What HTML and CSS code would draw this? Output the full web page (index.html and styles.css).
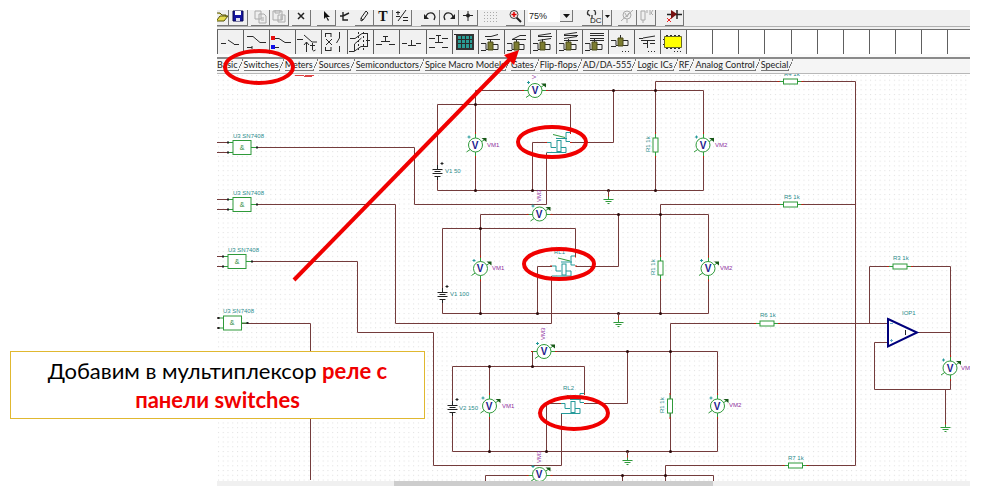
FILE: index.html
```html
<!DOCTYPE html>
<html lang="ru">
<head>
<meta charset="utf-8">
<title>Мультиплексор: реле</title>
<link rel="stylesheet" href="styles.css">
</head>
<body>
<main class="slide">
  <section class="app">
    <div class="toolbar">
      <div class="group">
        <button class="tool tool-cut" aria-label="Open"><svg width="12" height="15"><path d="M0 3h3l2 2h4v2M0 11h7l4-5H3L0 10" fill="#e6dc50" stroke="#55520a"/></svg></button>
        <button class="tool" aria-label="Save"><svg width="16" height="15"><path d="M3 1h10v10H3z" fill="#1414a0" stroke="#080850"/><path d="M5 1h6v4H5z" fill="#fff"/><path d="M6 8h4v3H6z" fill="#dde"/></svg></button>
      </div>
      <div class="group near">
        <button class="tool" aria-label="Copy"><svg width="16" height="15"><path d="M3 1h6v8H3zM7 4h5l2 2v7H7zM9 8h3M9 10h3" fill="#eee" stroke="#aaa"/></svg></button>
        <button class="tool" aria-label="Paste"><svg width="16" height="15"><path d="M2 1h9v9H2zM4 0h5v3H4zM7 5h7v7H7zM9 7h3M9 9h3" fill="#eee" stroke="#aaa"/></svg></button>
      </div>
      <div class="group near">
        <button class="tool" aria-label="Delete"><svg width="16" height="15"><path d="M5 3l6 6M11 3l-6 6" stroke="#222" stroke-width="1.5"/></svg></button>
      </div>
      <div class="group">
        <button class="tool" aria-label="Select"><svg width="16" height="15"><path d="M6 1v8l2-2 2 4 1-1-2-3h3z" fill="#111"/></svg></button>
        <button class="tool flat" aria-label="Wire"><svg width="16" height="15"><path d="M3 6h3M6 2v8h5M6 6l6-3" fill="none" stroke="#222" stroke-width="1.400"/></svg></button>
        <button class="tool" aria-label="Pencil"><svg width="16" height="15"><path d="M5 11V8l5-7 2 2-5 7zM5 8l2 2" fill="#eee" stroke="#222"/></svg></button>
        <button class="tool tool-text" aria-label="Text">T</button>
        <button class="tool" aria-label="Scale"><svg width="16" height="15"><path d="M4 11L12 0M2 2.500h4M4 1v4M9 7.500h5M9 10.500h5M2 6.500h4" fill="none" stroke="#222"/></svg></button>
      </div>
      <div class="group far">
        <button class="tool" aria-label="Undo"><svg width="16" height="15"><path d="M4 7C5 2 12 1 13 7l-1 3" fill="none" stroke="#222" stroke-width="1.300"/><path d="M2 4v5h5z" fill="#222"/></svg></button>
        <button class="tool" aria-label="Redo"><svg width="16" height="15"><path d="M12 7C11 2 4 1 3 7l1 3" fill="none" stroke="#222" stroke-width="1.300"/><path d="M14 4v5H9z" fill="#222"/></svg></button>
        <button class="tool" aria-label="Center"><svg width="16" height="15"><path d="M3 5.500h10M8 1v10" stroke="#222"/><circle cx="8" cy="5.500" r="2" fill="#222"/></svg></button>
      </div>
      <div class="group near">
        <button class="tool flat" aria-label="Grid"><svg width="16" height="15"><path d="M2 2.500h13M2 5.500h13M2 8.500h13M2 11.500h13" stroke="#aaa" stroke-dasharray="1 2"/></svg></button>
      </div>
      <div class="group">
        <button class="tool" aria-label="Zoom"><svg width="16" height="15"><path d="M9 7l5 5" stroke="#222" stroke-width="2"/><circle cx="7" cy="4.500" r="4" fill="#f6e8e8" stroke="#444"/><path d="M4.500 4.500h5M7 2v5" stroke="#d00" stroke-width="1.500"/></svg></button>
      </div>
      <div class="group near">
        <label class="combo"><select aria-label="Масштаб"><option>75%</option></select><svg class="combo-arrow" width="13" height="12"><path d="M3 4h7l-3.500 4z" fill="#111"/></svg></label>
      </div>
      <div class="group far">
        <button class="tool tool-dc" aria-label="DC"><svg width="19" height="15"><path d="M5 5a4 4 0 1 1 7 0M5 4l2 2M9 5v3" fill="none" stroke="#333" stroke-width="1.300"/><text class="dc" x="7" y="13">DC</text></svg></button>
        <button class="tool tool-drop" aria-label="DC mode"><svg width="9" height="15"><path d="M2 5h5L4.500 8z" fill="#111"/></svg></button>
      </div>
      <div class="group">
        <button class="tool" aria-label="Meter"><svg width="16" height="15"><circle cx="8" cy="5" r="4" fill="none" stroke="#aaa"/><path d="M2 11L14 0M8 9v4M6 3l2 4 2-4" stroke="#aaa" fill="none"/></svg></button>
        <button class="tool" aria-label="Resistor"><svg width="16" height="15"><path d="M3 1h4v9H3zM5 10v3M9 3V0M12 0v5M15 0l-2 3 2 2" fill="none" stroke="#aaa"/></svg></button>
      </div>
      <div class="group far">
        <button class="tool" aria-label="Diode"><svg width="17" height="15"><path d="M1 4.500h15M11 0v9" stroke="#222" stroke-width="1.500"/><path d="M5 0l6 4-6 5z" fill="#711"/><path d="M1 8l4 4M5 8l-4 4" stroke="#e22"/></svg></button>
      </div>
    </div>

    <div class="parts">
      <button class="part" aria-label="Switch"><svg width="24" height="24"><path d="M3 13.500h5M10 10l6 4M16 14.500h5" /></svg></button>
      <button class="part" aria-label="Changeover"><svg width="24" height="24"><path d="M3 6.500h6l7 6h6M3 17.500h5M8 16v3" /></svg></button>
      <button class="part" aria-label="Digital switch"><svg width="24" height="24"><path d="M3 8.500h6l6 4h6M3 17.500h6" /><path d="M1 6h4v4H1z" class="red"/><path d="M1 15h4v4H1z" class="blue"/></svg></button>
      <button class="part" aria-label="Time switch"><svg width="24" height="24"><path d="M1 9.500h6M8 5l8 7h5M10.500 22V12M8 15l2.500-3 2.500 3M16.500 13v7q1 2 3 0M14 15.500h5" /></svg></button>
      <button class="part" aria-label="Double switch"><svg width="24" height="24"><path d="M3 3.500h6M3.500 3v4M9 3v4M3 20.500h6M3.500 17v4M9 17v4M4 9l6 6M10 9l-6 6M17.500 2v6l-3 5M17.500 22v-6"/></svg></button>
      <button class="part" aria-label="Controlled switch"><svg width="24" height="24"><path d="M2 8.500h5l7-5h6M1 21.500h5l7-5h7M6.500 21v-7l7-6M19.500 3v14M18 10.500h4" /><path d="M10.500 2v20M15.500 2v20" stroke-dasharray="2 2"/></svg></button>
      <button class="part" aria-label="Push button"><svg width="24" height="24"><path d="M2 14.500h6M7 11.500h9M15 14.500h6M11.500 6v5M9 6.500h5" /></svg></button>
      <button class="part" aria-label="Push button closed"><svg width="24" height="24"><path d="M2 13.500h5M8 15.500h8M16 13.500h5M11.500 10v5" /></svg></button>
      <button class="part" aria-label="Double push button"><svg width="24" height="24"><path d="M2 8.500h6M15 8.500h6M8 12.500h8M2 17.500h6M15 17.500h6M11.500 5v7M9 5.500h5" /></svg></button>
      <button class="part" aria-label="Keypad"><svg width="24" height="24"><path d="M3 4h18v16H3z" class="case"/><path d="M5 6h14v12H5z" class="keys"/><path d="M5 9.500h14M5 13.500h14M8.500 6v12M12.500 6v12M16.500 6v12M1 4.500h2"/></svg></button>
      <button class="part" aria-label="Relay"><svg width="24" height="24"><path d="M6 6.500h6l7-2M8 9.500h13M2 13.500h5v6h12v-5h-5M2 20.500h5M11.500 9v3" /><path class="coil" d="M9 12h5v8H9z"/></svg></button>
      <button class="part" aria-label="Changeover relay"><svg width="24" height="24"><path d="M7 9.500l8-4h6M7 9.500h14M2 13.500h5v6h12v-5h-5M2 20.500h5M11.500 9v3" /><path class="coil" d="M9 12h5v8H9z"/></svg></button>
      <button class="part" aria-label="Double relay"><svg width="24" height="24"><path d="M7 5.500l13-2M7 6.500h14M7 10.500l13-2M2 13.500h5v6h12v-5h-5M2 20.500h5M11.500 9v3" /><path class="coil" d="M9 12h5v8H9z"/></svg></button>
      <button class="part" aria-label="Triple relay"><svg width="24" height="24"><path d="M7 4.500l13-2M7 5.500h14M7 8.500l13-2M7 10.500h14M2 13.500h5v6h12v-5h-5M2 20.500h5M11.500 9v3" /><path class="coil" d="M9 12h5v8H9z"/></svg></button>
      <button class="part" aria-label="Quad relay"><svg width="24" height="24"><path d="M7 3.500h14M7 5.500h14M7 8.500h14M7 10.500h14M2 13.500h5v6h12v-5h-5M2 20.500h5M11.500 9v3" /><path class="coil" d="M9 12h5v8H9z"/></svg></button>
      <button class="part" aria-label="Relay coil"><svg width="24" height="24"><path d="M2 10.500h5v5h12v-5h-5M2 16.500h5M11.500 5v3" /><path class="coil" d="M9 8h5v8H9z"/><path d="M13 21.500h7" stroke-dasharray="1 2"/></svg></button>
      <button class="part" aria-label="Relay contacts"><svg width="24" height="24"><path d="M4 8.500h4M8 8l12-2M6 10.500h14M8 13.500h5M12.500 10v8M15 13.500h5" /><path d="M13 21.500h7" stroke-dasharray="1 2"/></svg></button>
      <button class="part" aria-label="Chip"><svg width="24" height="24"><path d="M5 5.500h14M5 18.500h14M2 9.500h20M2 14.500h20" stroke-dasharray="2 2"/><path d="M3.500 6.500h17v11h-17z" class="chip"/><path d="M13 21.500h7" stroke-dasharray="1 2"/></svg></button>
      <span class="part blank"></span><span class="part blank"></span><span class="part blank"></span><span class="part blank"></span><span class="part blank"></span><span class="part blank"></span><span class="part blank"></span><span class="part blank"></span><span class="part blank"></span><span class="part blank"></span><span class="part blank"></span>
    </div>

    <nav class="tabs">
      <button class="tab">Basic</button>
      <button class="tab active">Switches</button>
      <button class="tab">Meters</button>
      <button class="tab">Sources</button>
      <button class="tab">Semiconductors</button>
      <button class="tab">Spice Macro Models</button>
      <button class="tab">Gates</button>
      <button class="tab">Flip-flops</button>
      <button class="tab">AD/DA-555</button>
      <button class="tab">Logic ICs</button>
      <button class="tab">RF</button>
      <button class="tab">Analog Control</button>
      <button class="tab">Special</button>
    </nav>

    <svg class="canvas" role="img" aria-label="Circuit">
      <defs>
        <pattern id="grid" width="4.760" height="4.760" patternUnits="userSpaceOnUse"><rect x="1" y="1" width="1" height="1" fill="#dedede"/></pattern>
        <g id="meter">
          <path d="M-9 7L10 -6" class="green"/><path d="M6 -7h5v4z" fill="#185818"/>
          <circle r="7" class="green white"/>
          <path d="M-8 -8h3M-6.500 -9.500v3" class="teal"/>
        </g>
        <g id="pins"><path d="M0 -11v4M0 7v4" class="green"/><path d="M-.5 -13h1v2h-1zM-.5 11h1v2h-1z" class="pin"/></g>
        <g id="hpins"><path d="M-11 0h4M7 0h4" class="green"/><path d="M-13 -.5h2v1h-2zM11 -.5h2v1h-2z" class="pin"/></g>
        <g id="res"><path d="M-11 0h4M7 0h4" class="green"/><rect x="-7" y="-2.500" width="14" height="5" class="green white"/><path d="M-13 -.5h2v1h-2zM11 -.5h2v1h-2z" class="pin"/></g>
        <g id="ground"><path d="M0 0v5" class="wire"/><path d="M0 5v4M-5 9h10M-3 11h6M-1 13h2" class="green"/><path d="M-.5 4h1v2h-1z" class="pin"/></g>
        <g id="gate"><path d="M-16 -5h12M-16 5h12" class="wire"/><path d="M-5 -5h5M-5 5h5M18 0h6" class="green"/><rect y="-7" width="18" height="14" class="green white"/><path d="M-6 -6h2v2h-2zM-6 4h2v2h-2zM23 -1h2v2h-2z" fill="#222"/></g>
        <g id="battery"><rect x="-2" y="-3" width="4" height="7" fill="#fff"/><path d="M-5 -2.500h10M-3 -.5h6M-5 1.500h10M-3 4.500h6M0 4v4M0 -3v-4" class="dark"/><path d="M3 -8.500h3M4.500 -10v3" class="dark"/></g>
        <g id="relay"><path d="M0 -8l12 3" class="green"/><path d="M17 -10h-4v9M3 -4h11M13 -1h4M-6 0h4v5h5M8 5h5v5H-6" class="teal"/><rect x="4" y="-2" width="4" height="11" class="teal"/><path d="M-8 -.5h2v1h-2zM17 -.5h2v1h-2zM17 -10.500h1v2h-1z" class="pin"/></g>
        <circle id="dot" r="1.500" fill="#2c0a0a"/>
      </defs>
      <rect width="100%" height="100%" fill="url(#grid)"/>
      <g transform="translate(-217 -74)">
        <g class="wire">
          <path d="M251 147.500H414.500V204.500H546.500V152.500"/>
          <path d="M251 204.500H395.500V323.500H551.500V276"/>
          <path d="M247 261.500H357.500V332.500H433.500V465.500H561.500V413.500"/>
          <path d="M242 323.500H310.500V480"/>
          <path d="M475.500 190.500V90.500H703.500V190.500H437.500V104.500H570.500V133M613.500 90.500V142.500H571M532.500 190.500V142.500H547M655.500 190.500V81.500H855.500V465.500H665.500V481"/>
          <path d="M480.500 313.500V214.500H708.500V313.500H442.500V228.500H575.500V256M618.500 214.500V266.500H576M537.500 313.500V266.500H552M660.500 313.500V204.500H855.500"/>
          <path d="M532.500 366V351.500H717.500V451.500H452.500V366.500H584.500V394M489.500 366V451M627.500 351.500V403.500H585M546.500 451.500V403.500H561M670.500 451.500V323.500H888"/>
          <path d="M485.500 481V475.500H713.500V481M622.500 475V481"/>
          <path d="M869.500 323V266.500H950.500V389.500H874.500V342.500H888M917 332.500H950M945.500 389V422"/>
        </g>
        <use href="#dot" x="475.500" y="104.500"/><use href="#dot" x="613.500" y="90.500"/><use href="#dot" x="655.500" y="90.500"/><use href="#dot" x="475.500" y="190.500"/><use href="#dot" x="532.500" y="190.500"/><use href="#dot" x="608.500" y="190.500"/><use href="#dot" x="655.500" y="190.500"/>
        <use href="#dot" x="480.500" y="228.500"/><use href="#dot" x="618.500" y="214.500"/><use href="#dot" x="660.500" y="214.500"/><use href="#dot" x="480.500" y="313.500"/><use href="#dot" x="537.500" y="313.500"/><use href="#dot" x="618.500" y="313.500"/><use href="#dot" x="660.500" y="313.500"/>
        <use href="#dot" x="489.500" y="366.500"/><use href="#dot" x="532.500" y="366.500"/><use href="#dot" x="627.500" y="351.500"/><use href="#dot" x="670.500" y="351.500"/><use href="#dot" x="489.500" y="451.500"/><use href="#dot" x="546.500" y="451.500"/><use href="#dot" x="627.500" y="451.500"/><use href="#dot" x="670.500" y="451.500"/>
        <use href="#dot" x="622.500" y="475.500"/><use href="#dot" x="665.500" y="475.500"/>

        <use href="#gate" x="233" y="147.500"/><use href="#gate" x="233" y="204.500"/><use href="#gate" x="228" y="261.500"/><use href="#gate" x="223.500" y="323"/>
        <use href="#battery" x="437.500" y="172"/><use href="#battery" x="442.500" y="295"/><use href="#battery" x="452.500" y="408"/>
        <use href="#relay" x="553" y="142.500"/><use href="#relay" x="558" y="266"/><use href="#relay" x="567" y="403.500"/>
        <use href="#ground" x="608.500" y="190.500"/><use href="#ground" x="618.500" y="313.500"/><use href="#ground" x="627.500" y="451.500"/><use href="#ground" x="945.500" y="418.500"/>
        <use href="#res" x="790.500" y="81.500"/><use href="#res" x="790.500" y="204.500"/><use href="#res" x="767" y="323.500"/><use href="#res" x="795.500" y="465.500"/><use href="#res" x="900" y="266.500"/>
        <use href="#res" transform="translate(655.500 145) rotate(90)"/><use href="#res" transform="translate(660.500 268) rotate(90)"/><use href="#res" transform="translate(670 406) rotate(90)"/>
        <use href="#hpins" x="535" y="90.500"/><use href="#hpins" x="539.500" y="214.500"/><use href="#hpins" x="544" y="351.500"/><use href="#hpins" x="539.500" y="475.500"/>
        <use href="#pins" x="475.500" y="145"/><use href="#pins" x="703.500" y="145"/><use href="#pins" x="480.500" y="268.500"/><use href="#pins" x="708.500" y="268.500"/><use href="#pins" x="489.500" y="406"/><use href="#pins" x="717.500" y="406"/><use href="#pins" x="950.500" y="368"/>
        <use href="#meter" x="535" y="90.500"/><use href="#meter" x="539.500" y="214"/><use href="#meter" x="544" y="351.500"/><use href="#meter" x="539.500" y="474.500"/>
        <use href="#meter" x="475.500" y="145"/><use href="#meter" x="703" y="145"/><use href="#meter" x="480.500" y="268.500"/><use href="#meter" x="708" y="268.500"/><use href="#meter" x="489.500" y="406"/><use href="#meter" x="717.500" y="406"/><use href="#meter" x="950" y="368"/>
        <path d="M888 319L917 332.500 888 346.500z" fill="#fff" stroke="#00007c" stroke-width="2"/><path d="M905.500 330v5" class="dark"/><path d="M890 323.500h3M890 340.500h3M891.500 339v3" stroke="#6ac"/>

        <g class="volt"><text x="535" y="94">V</text><text x="539" y="218">V</text><text x="544" y="355">V</text><text x="539" y="478">V</text><text x="475" y="149">V</text><text x="703" y="149">V</text><text x="480" y="272">V</text><text x="708" y="272">V</text><text x="489" y="410">V</text><text x="717" y="410">V</text><text x="950" y="372">V</text></g>
        <g class="amp"><text x="242" y="150">&amp;</text><text x="242" y="207">&amp;</text><text x="237" y="264">&amp;</text><text x="232" y="325">&amp;</text></g>
        <g class="name"><text x="233" y="138">U3 SN7408</text><text x="233" y="195">U3 SN7408</text><text x="228" y="252">U3 SN7408</text><text x="223" y="313">U3 SN7408</text>
          <text x="445" y="173">V1 50</text><text x="450" y="296">V1 100</text><text x="459" y="410">V2 150</text>
          <text x="554" y="254">RL1</text><text x="563" y="390">RL2</text><text x="784" y="76">R4 1k</text>
          <text x="784" y="199">R5 1k</text><text x="760" y="317">R6 1k</text><text x="788" y="460">R7 1k</text><text x="893" y="260">R3 1k</text><text x="902" y="315">IOP1</text>
          <text transform="translate(650 152) rotate(-90)">R1 1k</text><text transform="translate(655 275) rotate(-90)">R1 1k</text><text transform="translate(664 413) rotate(-90)">R1 1k</text></g>
        <g class="vm"><text x="487" y="147">VM1</text><text x="492" y="270">VM1</text><text x="502" y="408">VM1</text><text x="715" y="147">VM2</text><text x="720" y="270">VM2</text><text x="729" y="407">VM2</text><text x="961" y="370">VM</text>
          <text transform="translate(536 79) rotate(-90)">V</text><text transform="translate(541 202) rotate(-90)">VM3</text><text transform="translate(545 340) rotate(-90)">VM3</text><text transform="translate(541 463) rotate(-90)">VM3</text></g>
        <path d="M295 75.500h20M304 76.500h8" stroke="#d44" stroke-dasharray="9 1"/>
      </g>
    </svg>
    <div class="scroll"><div class="thumb"></div></div>
  </section>

  <svg class="marks" aria-hidden="true">
    <g fill="none" stroke="#f00000" stroke-width="4">
      <ellipse cx="259" cy="67" rx="34" ry="16"/>
      <ellipse cx="552" cy="142" rx="34" ry="15"/>
      <ellipse cx="559" cy="264" rx="35" ry="15"/>
      <ellipse cx="574" cy="413" rx="34" ry="16"/>
      <path d="M294 280L511 58"/>
    </g>
    <path d="M519 50L514 65 504 55z" fill="#f00000"/>
  </svg>

  <p class="note">Добавим в мультиплексор <strong>реле с панели switches</strong></p>
</main>
</body>
</html>
```

FILE: styles.css
```css
* { box-sizing: border-box; }

body {
  margin: 0;
  background: #fff;
  font-family: "Liberation Sans", Arial, sans-serif;
}

.slide {
  position: relative;
  min-height: 495px;
  padding: 10px 19px 9px 217px;
}

.app { display: flex; flex-direction: column; overflow: hidden; }

button {
  padding: 0;
  border: 0;
  background: none;
  font: inherit;
}

/* main toolbar */
.toolbar {
  display: flex;
  height: 19px;
  background: linear-gradient(#f0f0f0 16px, #b0b0b0 16px, #b0b0b0 17px, #f0f0f0 17px);
}
.group { display: flex; height: 16px; margin-left: 6px; }
.group:first-child { margin-left: 0; }
.group.near { margin-left: 3px; }
.group.far { margin-left: 9px; }
.tool {
  display: flex;
  justify-content: center;
  width: 19px;
  height: 16px;
  border-right: 1px solid #777;
  border-bottom: 1px solid #777;
  overflow: hidden;
}
.tool-cut { width: 12px; }
.tool.flat { border-color: transparent; }
.tool-text { font: bold 14px/13px "Liberation Serif", serif; color: #111; }
.tool-dc { width: 21px; }
.tool-drop { width: 9px; }
.dc { font: 8px "Liberation Sans", sans-serif; fill: #111; }

.combo { position: relative; display: flex; width: 45px; height: 12px; background: #fff; }
.combo select {
  width: 100%;
  height: 12px;
  padding: 0 0 0 1px;
  border: 0;
  appearance: none;
  background: #fff;
  color: #222;
  font: 9px/12px "Liberation Sans", sans-serif;
}
.combo-arrow {
  position: absolute;
  top: 0;
  right: 0;
  background: #eee;
  border-right: 1px solid #777;
  border-bottom: 1px solid #777;
}

/* component bar */
.parts {
  display: grid;
  grid-template-columns: repeat(28, 26fr) 23fr;
  height: 30px;
  padding-bottom: 3px;
  border-top: 1px solid #707070;
  border-bottom: 2px solid #8a8a8a;
  background: #fbfbfb;
}
.part {
  display: flex;
  min-width: 0;
  height: 24px;
  border-left: 1px solid #606060;
  background: #f1f1f1;
  overflow: hidden;
}
.part.blank { background: #fff; }
.part path { stroke: #2a2a2a; fill: none; }
.part .coil { fill: #7c7c30; stroke: #4a4a18; }
.part .red { fill: #e81010; stroke: none; }
.part .blue { fill: #1010e8; stroke: none; }
.part .case { fill: #333; stroke: none; }
.part .keys { fill: #2a9c94; stroke: none; }
.part .chip { fill: #ffff00; stroke: #66662a; }

/* tabs */
.tabs {
  display: flex;
  gap: 6px;
  height: 15px;
  border-bottom: 1px solid #b8b8b8;
  background: #f5f5f5;
}
.tab {
  position: relative;
  height: 12px;
  border-bottom: 1px solid #777;
  color: #222;
  font: 9px/11px Lato, "Liberation Sans", sans-serif;
  white-space: nowrap;
}
.tab.active { background: #fff; }
.tab::after {
  content: "";
  position: absolute;
  top: 0;
  left: 100%;
  width: 5px;
  height: 12px;
  background: linear-gradient(to bottom right, transparent 46%, #777 46%, #777 54%, transparent 54%);
}

/* schematic */
.canvas { display: block; width: 100%; height: 407px; }
.wire { fill: none; stroke: #743c3c; }
.green { fill: none; stroke: #2f9a3a; }
.white { fill: #fff; }
.teal { fill: none; stroke: #259a9a; }
.dark { fill: none; stroke: #222; }
.pin { fill: #c02010; }
.name { font-size: 6px; fill: #2a8c8c; }
.vm { font-size: 6px; fill: #8c2c9c; }
.amp { font-size: 7px; fill: #2f8a3a; text-anchor: middle; }
.volt { font-size: 10px; font-weight: bold; fill: #20208c; text-anchor: middle; }

.scroll { height: 5px; padding-left: 23.5%; background: #f0f0f0; }
.thumb { width: 55.4%; height: 5px; background: #cdcdcd; }

/* annotations over the schematic */
.marks { position: absolute; inset: 0; width: 100%; height: 100%; pointer-events: none; }
.note {
  position: absolute;
  left: 10px;
  top: 351px;
  width: 415px;
  margin: 0;
  padding: 4px 30px;
  border: 1px solid #e0b830;
  background: #fff;
  color: #000;
  font: 22px/29px Lato, "Open Sans", sans-serif;
  text-align: center;
}
.note strong { color: #f00000; }
```
